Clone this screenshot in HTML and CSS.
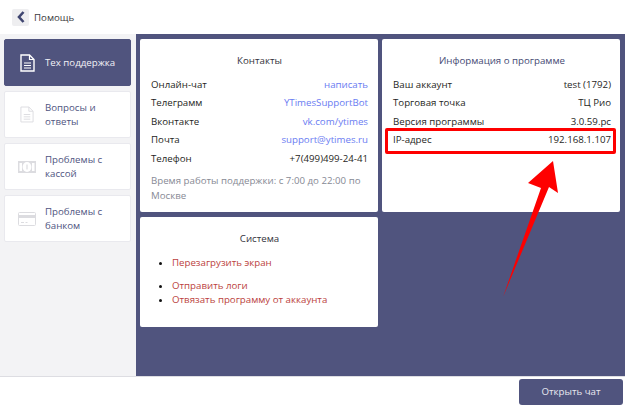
FILE: index.html
```html
<!DOCTYPE html>
<html lang="ru">
<head>
<meta charset="utf-8">
<title>Помощь</title>
<link rel="stylesheet" href="styles.css">
</head>
<body>
<div class="app">
  <header class="top">
    <button class="back"><svg width="8" height="12" viewBox="0 0 8 12"><path d="M6.500 1 L2 6 L6.500 11" fill="none" stroke="#3f4570" stroke-width="2.600"/></svg></button>
    <span class="top-title">Помощь</span>
  </header>
  <div class="body">
    <nav class="side">
      <a class="item active">
        <span class="slot"><svg width="15" height="18" viewBox="0 0 15 18"><path d="M1 1h8.500L14 5.500V17H1z" fill="none" stroke="currentColor" stroke-width="1.400"/><path d="M9.500 1v4.500H14M4 9h7M4 11.500h7M4 14h7" fill="none" stroke="currentColor" stroke-width="1.200"/></svg></span>
        <span class="label">Тех поддержка</span>
      </a>
      <a class="item">
        <span class="slot"><svg width="14" height="17" viewBox="0 0 15 18"><path d="M1 1h8.500L14 5.500V17H1z" fill="none" stroke="currentColor" stroke-width="1"/><path d="M9.500 1v4.500H14M4 9h7M4 11.500h7M4 14h7" fill="none" stroke="currentColor" stroke-width="1"/></svg></span>
        <span class="label">Вопросы и ответы</span>
      </a>
      <a class="item">
        <span class="slot"><svg width="18" height="12" viewBox="0 0 18 12"><rect width="18" height="12" fill="currentColor"/><ellipse cx="9" cy="6" rx="4.400" ry="5" fill="#fff"/><rect x="1.500" y="2" width="2.500" height="8" fill="#fff"/><rect x="14" y="2" width="2.500" height="8" fill="#fff"/><path d="M9 3.500v5" stroke="currentColor" stroke-width="1.200"/></svg></span>
        <span class="label">Проблемы с кассой</span>
      </a>
      <a class="item">
        <span class="slot"><svg width="18" height="14" viewBox="0 0 18 14"><rect x=".5" y=".5" width="17" height="13" rx="1" fill="none" stroke="currentColor"/><rect x="1" y="3" width="16" height="3" fill="currentColor"/><path d="M3 10.500h3M7.500 10.500h2" stroke="currentColor"/></svg></span>
        <span class="label">Проблемы с банком</span>
      </a>
    </nav>
    <main class="main">
      <section class="card contacts">
        <h2>Контакты</h2>
        <div class="row"><span>Онлайн-чат</span><a>написать</a></div>
        <div class="row"><span>Телеграмм</span><a>YTimesSupportBot</a></div>
        <div class="row"><span>Вконтакте</span><a>vk.com/ytimes</a></div>
        <div class="row"><span>Почта</span><a>support@ytimes.ru</a></div>
        <div class="row"><span>Телефон</span><span>+7(499)499-24-41</span></div>
        <p class="note">Время работы поддержки: с 7:00 до 22:00 по Москве</p>
      </section>
      <section class="card info">
        <h2>Информация о программе</h2>
        <div class="row"><span>Ваш аккаунт</span><span>test (1792)</span></div>
        <div class="row"><span>Торговая точка</span><span>ТЦ Рио</span></div>
        <div class="row"><span>Версия программы</span><span>3.0.59.рс</span></div>
        <div class="row"><span>IP-адрес</span><span>192.168.1.107</span></div>
      </section>
      <section class="card system">
        <h2>Система</h2>
        <ul class="first"><li>Перезагрузить экран</li></ul>
        <ul><li>Отправить логи</li><li>Отвязать программу от аккаунта</li></ul>
      </section>
    </main>
  </div>
  <footer class="foot"><button class="chat">Открыть чат</button></footer>
  <div class="mark"></div>
  <svg class="arrow" width="625" height="406" viewBox="0 0 625 406"><polygon points="553,161 558,193 549,187 503,297 541,188 528,183" fill="#fe0000"/></svg>
</div>
</body>
</html>
```
FILE: styles.css
```css
* { box-sizing: border-box; }
html, body { margin: 0; padding: 0; }
body { width: 625px; height: 406px; overflow: hidden; background: #fff; font-family: "Open Sans", sans-serif; font-size: 9.700px; color: #1f1f24; }
.app { position: relative; width: 625px; height: 406px; display: flex; flex-direction: column; }
.top { height: 34px; flex: none; display: flex; align-items: center; padding-left: 12px; gap: 5px; background: #fff; }
.back { width: 17px; height: 17px; padding: 0; border: 0; background: #eeeef0; border-radius: 2px; display: flex; align-items: center; justify-content: center; }
.top-title { color: #3b3b40; }
.body { height: 342px; flex: none; display: flex; }
.side { width: 136px; flex: none; background: #f3f3f5; padding: 5px 5px 0 4px; display: flex; flex-direction: column; gap: 5px; }
.item { height: 47px; display: flex; align-items: center; background: #fff; border: 1px solid #e9e9ee; border-radius: 2px; color: #50557f; line-height: 14px; }
.slot { width: 40px; flex: none; display: flex; justify-content: center; color: #dcdce0; padding-left: 4px; }
.label { width: 72px; }
.item.active { background: #50547e; border-color: #50547e; color: #f2f2f7; }
.item.active .slot { color: #fff; }
.item.active .label { width: auto; }
.main { flex: 1; background: #50547e; padding: 5px 5px 0 4px; display: grid; grid-template-columns: 238px 238px; grid-template-rows: 173px 110px; gap: 5px 4px; align-content: start; }
.card { background: #fff; border-radius: 2px; padding: 0 10px 0 11px; }
.info { padding-right: 9px; }
.card h2 { margin: 0; font-weight: 400; font-size: 9.700px; text-align: center; line-height: 14px; color: #33333c; padding-top: 15px; padding-bottom: 8px; }
.row { display: flex; justify-content: space-between; height: 18.400px; line-height: 18.400px; white-space: nowrap; }
.row a { color: #6a7cf2; }
.note { margin: 5px 0 0; line-height: 15px; color: #878a95; }
.info h2 { color: #464a74; }
.system h2 { padding-top: 15px; padding-bottom: 10px; }
.system ul { margin: 0 0 9px; padding: 0 0 0 21px; color: #bb3f3e; line-height: 14px; }
.system li::marker { color: #111; }
.foot { flex: 1; display: flex; justify-content: flex-end; align-items: center; padding-right: 2px; border-top: 1px solid #dddde2; background: #fff; }
.chat { width: 104px; height: 26px; border: 0; border-radius: 3px; background: #50547e; color: #e8e8f0; font: 9.700px "Open Sans", sans-serif; }
.mark { position: absolute; left: 385px; top: 128px; width: 231px; height: 26px; border: 3px solid #fe0000; border-radius: 2px; }
.arrow { position: absolute; left: 0; top: 0; pointer-events: none; }
```
